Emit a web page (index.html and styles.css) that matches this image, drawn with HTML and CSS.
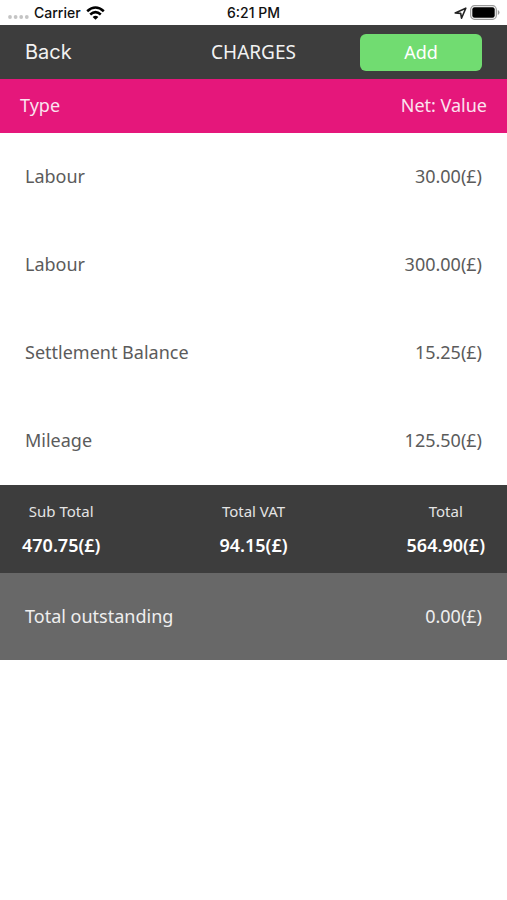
FILE: index.html
```html
<!DOCTYPE html>
<html lang="en">
<head>
<meta charset="utf-8">
<meta name="viewport" content="width=device-width, initial-scale=1">
<title>Charges</title>
<link rel="stylesheet" href="styles.css">
</head>
<body>
<div class="status">
  <div class="status-left">
    <svg class="dots" width="22" height="6" viewBox="0 0 22 6" aria-hidden="true"><circle cx="3" cy="3" r="1.900"/><circle cx="8.600" cy="3" r="1.900"/><circle cx="14.200" cy="3" r="1.900"/><circle cx="19.800" cy="3" r="1.900"/></svg>
    <span>Carrier</span>
    <svg width="19" height="14" viewBox="0 0 19 14" aria-hidden="true"><g fill="none" stroke="#000" stroke-width="2.600"><path d="M1.200 5.200q8.300-7.400 16.600 0"/><path d="M4.200 8.500q5.300-4.600 10.600 0"/></g><path d="M6.600 10.900q2.900-2.200 5.800 0L9.500 13.800z"/></svg>
  </div>
  <span>6:21 PM</span>
  <div class="status-right">
    <svg width="13" height="12" viewBox="0 0 13 12" aria-hidden="true"><path d="M1.200 5.900 11.800 1.200 7.500 11.200 6.700 6.400z" fill="none" stroke="#222" stroke-width="1.600" stroke-linejoin="round"/></svg>
    <svg width="30" height="15" viewBox="0 0 30 15" aria-hidden="true"><rect x=".7" y=".7" width="25.600" height="13.600" rx="3.800" fill="#fff" stroke="#999" stroke-width="1.200"/><rect x="2.300" y="2.300" width="22.400" height="10.400" rx="2.200"/><path d="M27.800 5v5q1.700-.7 1.700-2.500T27.800 5z" fill="#999"/></svg>
  </div>
</div>
<header class="bar">
  <button class="back" type="button">Back</button>
  <h1>CHARGES</h1>
  <button class="add" type="button">Add</button>
</header>
<main>
  <table class="charges">
    <thead><tr><th scope="col">Type</th><th scope="col">Net: Value</th></tr></thead>
    <tbody>
      <tr><td>Labour</td><td>30.00(£)</td></tr>
      <tr><td>Labour</td><td>300.00(£)</td></tr>
      <tr><td>Settlement Balance</td><td>15.25(£)</td></tr>
      <tr><td>Mileage</td><td>125.50(£)</td></tr>
    </tbody>
  </table>
  <dl class="totals">
    <div><dt>Sub Total</dt><dd>470.75(£)</dd></div>
    <div><dt>Total VAT</dt><dd>94.15(£)</dd></div>
    <div><dt>Total</dt><dd>564.90(£)</dd></div>
  </dl>
  <dl class="outstanding"><dt>Total outstanding</dt><dd>0.00(£)</dd></dl>
</main>
</body>
</html>
```
FILE: styles.css
```css
* { box-sizing: border-box; }
body {
  margin: 0;
  background: #fff;
  color: #5b5b5b;
  font: 18px/24px "Noto Sans", sans-serif;
}
h1, dl, dd { margin: 0; }
svg { display: block; }
button { border: 0; padding: 0; cursor: pointer; }

.status {
  display: grid;
  grid-template-columns: 1fr auto 1fr;
  align-items: center;
  height: 25px;
  padding: 0 7px;
  color: #111;
  font: 500 14px/24px Inter, sans-serif;
}
.status-left, .status-right { display: flex; align-items: center; gap: 5px; }
.status-right { justify-content: flex-end; gap: 3px; }
.dots { fill: #c4c4c4; margin-top: 8px; }

.bar {
  display: grid;
  grid-template-columns: 1fr auto 1fr;
  align-items: center;
  height: 54px;
  padding: 0 25px;
  background: #3d3d3d;
  color: #f2f2f2;
}
.bar h1 { font-size: 19px; font-weight: 400; }
.back {
  justify-self: start;
  background: none;
  color: inherit;
  font: 20px/24px Inter, sans-serif;
}
.add {
  justify-self: end;
  width: 122px;
  height: 37px;
  border-radius: 6px;
  background: #71dc71;
  color: #fff;
  font: 18px/24px "Noto Sans", sans-serif;
}

.charges { width: 100%; border-collapse: collapse; }
.charges th {
  height: 54px;
  padding: 0 20px 2px;
  background: #e5177b;
  color: #fbe3ef;
  font-weight: 400;
  text-align: left;
}
.charges td { height: 88px; padding: 0 25px 2px; }
.charges th:last-child, .charges td:last-child { text-align: right; }

.totals {
  display: flex;
  justify-content: space-between;
  padding: 14px 22px;
  background: #3d3d3d;
  color: #e4e4e4;
  text-align: center;
}
.totals div { display: grid; gap: 8px; }
.totals dt { font-size: 15px; }
.totals dd { color: #fff; font-size: 18px; font-weight: 600; line-height: 28px; }

.outstanding {
  display: flex;
  justify-content: space-between;
  align-items: center;
  height: 87px;
  padding: 0 25px 2px;
  background: #686868;
  color: #efefef;
}
```
